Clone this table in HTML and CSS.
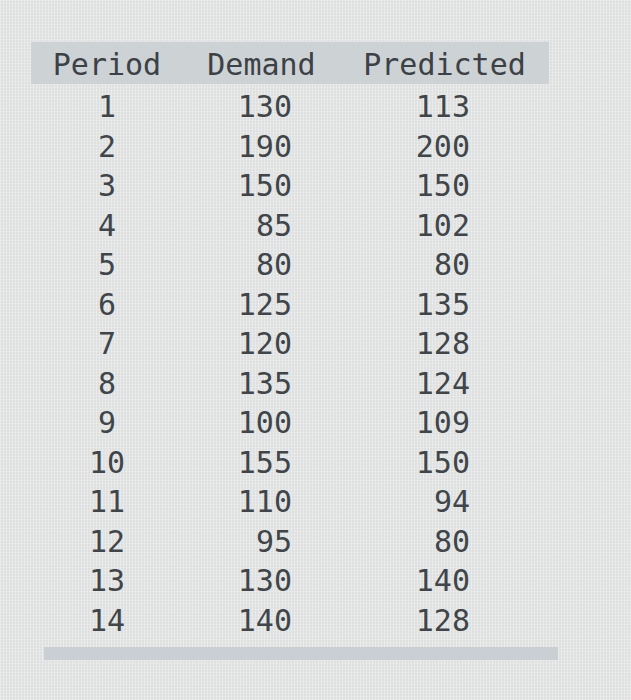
FILE: index.html
```html
<!DOCTYPE html>
<html>
<head>
<meta charset="utf-8">
<link rel="stylesheet" href="styles.css">
</head>
<body>
<div class="sheet">
  <div class="table">
    <div class="row head">
      <div class="c1">Period</div>
      <div class="c2">Demand</div>
      <div class="c3">Predicted</div>
    </div>
    <div class="body">
      <div class="row"><div class="c1">1</div><div class="c2">130</div><div class="c3">113</div></div>
      <div class="row"><div class="c1">2</div><div class="c2">190</div><div class="c3">200</div></div>
      <div class="row"><div class="c1">3</div><div class="c2">150</div><div class="c3">150</div></div>
      <div class="row"><div class="c1">4</div><div class="c2">85</div><div class="c3">102</div></div>
      <div class="row"><div class="c1">5</div><div class="c2">80</div><div class="c3">80</div></div>
      <div class="row"><div class="c1">6</div><div class="c2">125</div><div class="c3">135</div></div>
      <div class="row"><div class="c1">7</div><div class="c2">120</div><div class="c3">128</div></div>
      <div class="row"><div class="c1">8</div><div class="c2">135</div><div class="c3">124</div></div>
      <div class="row"><div class="c1">9</div><div class="c2">100</div><div class="c3">109</div></div>
      <div class="row"><div class="c1">10</div><div class="c2">155</div><div class="c3">150</div></div>
      <div class="row"><div class="c1">11</div><div class="c2">110</div><div class="c3">94</div></div>
      <div class="row"><div class="c1">12</div><div class="c2">95</div><div class="c3">80</div></div>
      <div class="row"><div class="c1">13</div><div class="c2">130</div><div class="c3">140</div></div>
      <div class="row"><div class="c1">14</div><div class="c2">140</div><div class="c3">128</div></div>
    </div>
  </div>
  <div class="bar"></div>
</div>
</body>
</html>
```

FILE: styles.css
```css
html, body {
  margin: 0;
  padding: 0;
}
body {
  width: 631px;
  height: 700px;
  overflow: hidden;
  background-color: #e7e9e8;
  background-image:
    repeating-linear-gradient(90deg, rgba(255,255,255,0.16) 0 1px, rgba(0,0,0,0.025) 1px 3px),
    repeating-linear-gradient(0deg, rgba(255,255,255,0.1) 0 1px, rgba(0,0,0,0.015) 1px 3px);
  font-family: "DejaVu Sans Mono", "Liberation Mono", monospace;
  color: #40454a;
}
.sheet {
  padding-top: 42px;
}
.table {
  margin-left: 31px;
  width: 518px;
}
.row {
  display: grid;
  grid-template-columns: 152px 157px 209px;
  font-size: 30px;
  line-height: 39.5px;
  height: 39.5px;
}
.head {
  background: #cdd2d5;
  height: 42px;
  box-sizing: border-box;
  padding-top: 3px;
  line-height: 39px;
  color: #3c4146;
}
.body {
  padding-top: 3px;
}
.c1 {
  text-align: center;
}
.c2 {
  text-align: right;
  padding-right: 48px;
}
.c3 {
  text-align: right;
  padding-right: 79px;
}
.head .c2, .head .c3 {
  text-align: center;
  padding-right: 0;
}
.bar {
  margin-top: 7px;
  margin-left: 44px;
  width: 514px;
  height: 13px;
  background: #c9cfd2;
}
```
